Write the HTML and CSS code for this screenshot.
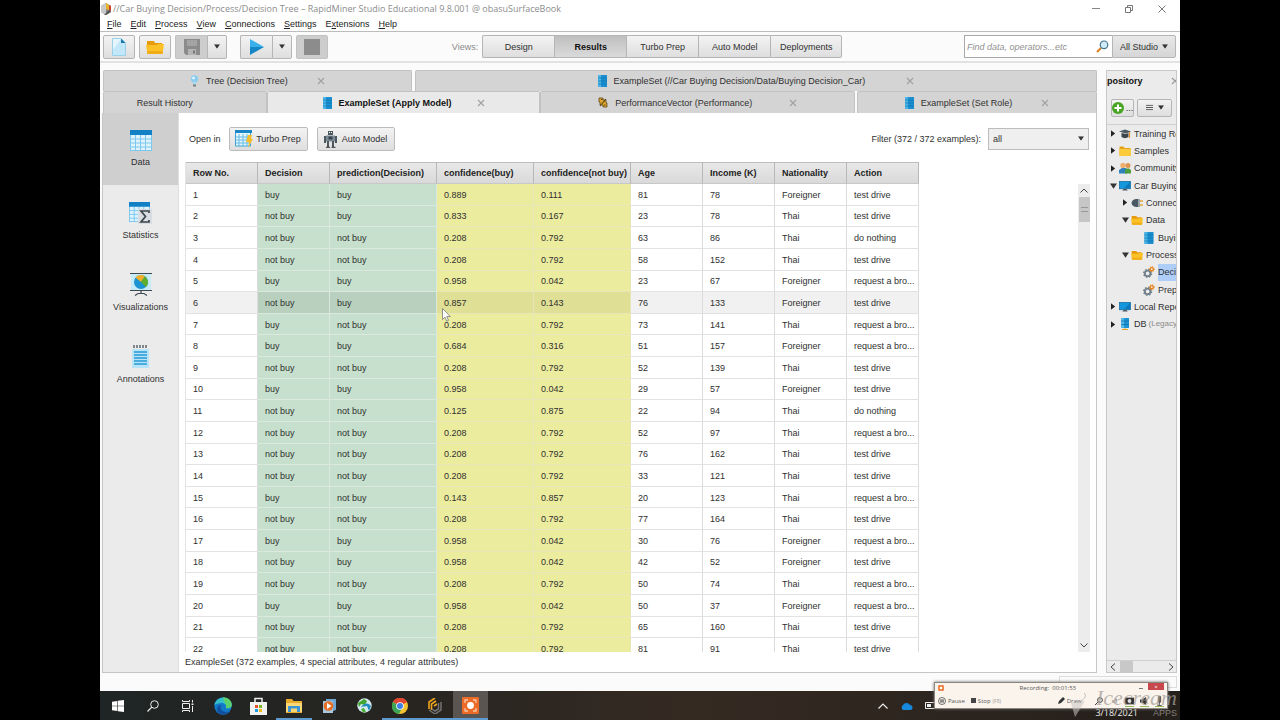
FILE: index.html
```html
<!DOCTYPE html>
<html lang="en">
<head>
<meta charset="utf-8">
<title>//Car Buying Decision/Process/Decision Tree – RapidMiner Studio Educational</title>
<link rel="stylesheet" href="styles.css">
</head>
<body>
<svg class="defs" aria-hidden="true">
  <symbol id="i-close" viewBox="0 0 8 8"><path d="M1 1l6 6M7 1L1 7" fill="none" stroke="currentColor" stroke-width="1.1"/></symbol>
  <symbol id="i-set" viewBox="0 0 9 12"><rect width="9" height="12" fill="#1b8fd0"/><rect width="3" height="12" fill="#49b4e6"/><path d="M0 3h9M0 6h9M0 9h9" stroke="#0f6ea8" stroke-width=".6"/></symbol>
  <symbol id="i-folder" viewBox="0 0 12 11"><path d="M.5 1h4l1 1.500h6V10H.5z" fill="#e3a21a"/><path d="M.5 3.500h11.500V10.500H.5z" fill="#fbcb3c"/></symbol>
  <symbol id="i-open" viewBox="0 0 18 16"><path d="M1 2h7l1 2h7v3H1z" fill="#e79a0c"/><path d="M0 6h11l1-1h6l-1.500 10H1.500z" fill="#fcc127"/><path d="M1 12h16l-.5 3H1.500z" fill="#f0ad15"/></symbol>
  <symbol id="i-monitor" viewBox="0 0 13 12"><rect x=".5" y="1" width="12" height="8" fill="#1497dc" stroke="#126da0" stroke-width=".8"/><path d="M12 1.500v7L6 8z" fill="#0d79ba"/><path d="M5 9h3l1.500 2h-6z" fill="#4e5b63"/></symbol>
  <symbol id="i-gears" viewBox="0 0 13 13"><circle cx="5" cy="8" r="3" fill="none" stroke="#71808b" stroke-width="2"/><circle cx="5" cy="8" r="4.300" fill="none" stroke="#71808b" stroke-width="1.400" stroke-dasharray="1.700 1.677"/><circle cx="9.500" cy="3.500" r="1.700" fill="none" stroke="#e8851d" stroke-width="1.500"/><circle cx="9.500" cy="3.500" r="2.800" fill="none" stroke="#e8851d" stroke-width="1" stroke-dasharray="1.100 1.100"/></symbol>
  <symbol id="i-down" viewBox="0 0 8 6"><path d="M0 0h8L4 6z" fill="#333"/></symbol>
  <symbol id="i-right" viewBox="0 0 6 8"><path d="M0 0l5 4-5 4z" fill="#222"/></symbol>
  <symbol id="i-grid" viewBox="0 0 22 21"><rect x=".5" y=".5" width="21" height="20" fill="#dff3fc" stroke="#7cc8ee"/><path d="M5.500 5v15M10.500 5v15M15.500 5v15M1 9h20M1 13h20M1 17h20" stroke="#7cc8ee" stroke-width="1"/><rect width="22" height="5" fill="#1180c4"/></symbol>
  <symbol id="i-bars" viewBox="0 0 8 7"><path d="M0 1h8M0 3.500h8M0 6h8" stroke="#444" stroke-width="1"/></symbol>
</svg>

<div class="window">
  <header class="titlebar">
    <svg class="ic12" viewBox="0 0 12 12"><path d="M6 0l5 3v6l-5 3-5-3V3z" fill="#888"/><path d="M6 0L1 3v6l5 3z" fill="#c9c9c9"/><path d="M6 0l3 2v5L6 6z" fill="#e6b62c"/><path d="M9 2l2 1v5L9 7z" fill="#c8402d"/><path d="M4 12l5-5 2 2-5 3z" fill="#555"/></svg>
    <h1>//Car Buying Decision/Process/Decision Tree – RapidMiner Studio Educational 9.8.001 @ obasuSurfaceBook</h1>
    <div class="winbtns">
      <button aria-label="Minimize"><svg viewBox="0 0 8 8"><path d="M0 3.500h8" stroke="#888"/></svg></button>
      <button aria-label="Restore"><svg viewBox="0 0 8 8"><path d="M.5 2.500h5v5h-5zM2.500 2.500v-2h5v5h-2" fill="none" stroke="#777"/></svg></button>
      <button aria-label="Close"><svg viewBox="0 0 8 8"><path d="M.5 .5l7 7M7.500 .5l-7 7" stroke="#777"/></svg></button>
    </div>
  </header>

  <nav class="menubar">
    <button><u>F</u>ile</button><button><u>E</u>dit</button><button><u>P</u>rocess</button><button><u>V</u>iew</button><button><u>C</u>onnections</button><button><u>S</u>ettings</button><button>E<u>x</u>tensions</button><button><u>H</u>elp</button>
  </nav>

  <div class="toolbar">
    <div class="tools">
      <button class="btn tool" aria-label="New process"><svg width="14" height="18" viewBox="0 0 14 18"><path d="M.5 .5h8.500l4.500 4.500v12.500H.5z" fill="#c2e7f9" stroke="#9ccfe9"/><path d="M1 12L9 1H1z" fill="#e4f5fd"/><path d="M9 .5v4.500h4.500z" fill="#1b78ae"/></svg></button>
      <button class="btn tool" aria-label="Open"><svg width="18" height="16"><use href="#i-open"/></svg></button>
      <div class="split">
        <button class="btn tool off" aria-label="Save"><svg width="16" height="16" viewBox="0 0 16 16"><path d="M0 0h16v16H2l-2-2z" fill="#8b8b8b"/><path d="M3 1h10v6H3z" fill="#a3a3a3"/><path d="M4 10h8v6H4z" fill="#b4b4b4"/><path d="M9 11.500h2v3H9z" fill="#777"/></svg></button>
        <button class="btn drop" aria-label="Save options"><svg width="6" height="5" viewBox="0 0 8 6"><use href="#i-down"/></svg></button>
      </div>
      <div class="split run">
        <button class="btn tool" aria-label="Run"><svg width="14" height="16" viewBox="0 0 14 16"><path d="M0 0l14 8H0z" fill="#39b0ea"/><path d="M0 16l14-8H0z" fill="#1587c6"/></svg></button>
        <button class="btn drop" aria-label="Run options"><svg width="6" height="5" viewBox="0 0 8 6"><use href="#i-down"/></svg></button>
      </div>
      <button class="btn tool off" aria-label="Stop"><svg width="16" height="16"><rect width="16" height="16" fill="#8c8c8c"/></svg></button>
    </div>
    <div class="views">
      <span>Views:</span>
      <div class="seg"><button class="btn">Design</button><button class="btn active">Results</button><button class="btn">Turbo Prep</button><button class="btn">Auto Model</button><button class="btn">Deployments</button></div>
    </div>
    <div class="search">
      <label><input type="search" placeholder="Find data, operators...etc" aria-label="Find data, operators"><svg width="13" height="13" viewBox="0 0 13 13"><path d="M1 12l4-4" stroke="#d9822b" stroke-width="2.200"/><circle cx="8" cy="4.800" r="3.800" fill="#cfeaf8" stroke="#48738c" stroke-width="1.200"/></svg></label>
      <button class="btn">All Studio <svg width="6" height="5" viewBox="0 0 8 6"><use href="#i-down"/></svg></button>
    </div>
  </div>

  <div class="workspace">
    <section class="results">
      <div class="tabs top">
        <div class="tab tree"><svg width="9" height="12" viewBox="0 0 9 12"><circle cx="4.500" cy="4" r="3.700" fill="#8ccdee"/><path d="M3 6.500h3v3H3z" fill="#a5d8f0"/><path d="M3 9.500h3v2H3z" fill="#777f84"/><circle cx="3.500" cy="3" r="1.300" fill="#ecf9ff"/></svg><span>Tree (Decision Tree)</span><button aria-label="Close tab"><svg><use href="#i-close"/></svg></button></div>
        <div class="tab car"><svg width="9" height="12"><use href="#i-set"/></svg><span>ExampleSet (//Car Buying Decision/Data/Buying Decision_Car)</span><button aria-label="Close tab"><svg><use href="#i-close"/></svg></button></div>
      </div>
      <div class="tabs">
        <div class="tab history"><span>Result History</span></div>
        <div class="tab apply active"><svg width="9" height="12"><use href="#i-set"/></svg><span>ExampleSet (Apply Model)</span><button aria-label="Close tab"><svg><use href="#i-close"/></svg></button></div>
        <div class="tab perf"><svg width="10" height="11" viewBox="0 0 10 11"><path d="M1 1h4v2h3v3h1v4H5V8H2V5H1z" fill="#e0a62b" stroke="#5d4718" stroke-width=".8"/><path d="M8 2L2 9M3 2.500h1.500M6 8h1.500" stroke="#5d4718" stroke-width="1.100"/></svg><span>PerformanceVector (Performance)</span><button aria-label="Close tab"><svg><use href="#i-close"/></svg></button></div>
        <div class="tab role"><svg width="9" height="12"><use href="#i-set"/></svg><span>ExampleSet (Set Role)</span><button aria-label="Close tab"><svg><use href="#i-close"/></svg></button></div>
      </div>
      <div class="panel">
        <nav class="side">
          <button class="active"><svg width="22" height="21"><use href="#i-grid"/></svg>Data</button>
          <button><svg width="24" height="22" viewBox="0 0 24 22"><svg width="21" height="20" viewBox="0 0 22 21"><use href="#i-grid"/></svg><rect x="9" y="7" width="14" height="15" fill="#d9dde2"/><path d="M20 11V9h-8l4.500 5.500L12 20h8v-2" fill="none" stroke="#3c454c" stroke-width="1.700"/></svg>Statistics</button>
          <button><svg width="22" height="23" viewBox="0 0 22 23"><rect x="1" y="1" width="20" height="16" fill="#c8ebf9"/><path d="M0 .5h22M0 17.500h22" stroke="#3e4a52"/><circle cx="11" cy="9" r="7" fill="#1c94d2"/><path d="M11 9L5.500 4.500A7 7 0 0 1 15 3.200z" fill="#f0b02a"/><path d="M11 9l4-5.800A7 7 0 0 1 16 14z" fill="#5fae2e"/><path d="M11 18v2M5 22.500l3-2h6l3 2" fill="none" stroke="#3e4a52" stroke-width="1.200"/></svg>Visualizations</button>
          <button><svg width="17" height="23" viewBox="0 0 17 23"><path d="M0 4h17v19H0z" fill="#b9e3f7"/><path d="M2 0v3M5 0v3M8 0v3M11 0v3M14 0v3" stroke="#4a555c" stroke-width="1.300"/><path d="M2 7h13M2 10h13M2 13h13M2 16h13M2 19h13" stroke="#249bd6" stroke-width="1.400"/></svg>Annotations</button>
        </nav>
        <div class="data">
          <div class="databar">
            <span>Open in</span>
            <button class="btn prep"><svg width="18" height="18" viewBox="0 0 18 18"><path d="M.5 1h15v15H.5z" fill="#e6f6fd" stroke="#3ba3da"/><path d="M4 4v12M8 4v12M12 4v12M1 7h15M1 10h15M1 13h15" stroke="#66bce6"/><path d="M0 0h17v3H0z" fill="#1a86c7"/><path d="M13 5h4l-1 4h2l-5 9 1-6h-3z" fill="#f6bd2a"/></svg>Turbo Prep</button>
            <button class="btn auto"><svg width="13" height="18" viewBox="0 0 13 18"><path d="M4 1h5v4H4z" fill="#4b5860"/><path d="M5 2.500h1M7 2.500h1" stroke="#fff"/><path d="M2 5.500h9v6H2z" fill="#7b8b95"/><path d="M4.500 6.500h4v3h-4z" fill="#39454c"/><path d="M1 6v7M12 6v7M4 11v6M9 11v6" stroke="#4b5860" stroke-width="2"/><path d="M2 17.300h4M7.500 17.300h4" stroke="#333"/></svg>Auto Model</button>
            <label class="filter">Filter (372 / 372 examples):
              <span class="pick"><select><option>all</option></select><svg width="6" height="5" viewBox="0 0 8 6"><use href="#i-down"/></svg></span>
            </label>
          </div>
          <div class="grid">
            <div class="clip">
            <table>
              <colgroup><col><col><col class="pred"><col class="conf"><col class="conf"><col><col><col><col></colgroup>
              <thead><tr><th>Row No.<th>Decision<th>prediction(Decision)<th>confidence(buy)<th>confidence(not buy)<th>Age<th>Income (K)<th>Nationality<th>Action</tr></thead>
              <tbody>
              <tr><td>1<td>buy<td>buy<td>0.889<td>0.111<td>81<td>78<td>Foreigner<td>test drive
              <tr><td>2<td>not buy<td>buy<td>0.833<td>0.167<td>23<td>78<td>Thai<td>test drive
              <tr><td>3<td>not buy<td>not buy<td>0.208<td>0.792<td>63<td>86<td>Thai<td>do nothing
              <tr><td>4<td>not buy<td>not buy<td>0.208<td>0.792<td>58<td>152<td>Thai<td>test drive
              <tr><td>5<td>buy<td>buy<td>0.958<td>0.042<td>23<td>67<td>Foreigner<td>request a bro...
              <tr class="hover"><td>6<td>not buy<td>buy<td>0.857<td>0.143<td>76<td>133<td>Foreigner<td>test drive
              <tr><td>7<td>buy<td>not buy<td>0.208<td>0.792<td>73<td>141<td>Thai<td>request a bro...
              <tr><td>8<td>buy<td>buy<td>0.684<td>0.316<td>51<td>157<td>Foreigner<td>request a bro...
              <tr><td>9<td>not buy<td>not buy<td>0.208<td>0.792<td>52<td>139<td>Thai<td>test drive
              <tr><td>10<td>buy<td>buy<td>0.958<td>0.042<td>29<td>57<td>Foreigner<td>test drive
              <tr><td>11<td>not buy<td>not buy<td>0.125<td>0.875<td>22<td>94<td>Thai<td>do nothing
              <tr><td>12<td>not buy<td>not buy<td>0.208<td>0.792<td>52<td>97<td>Thai<td>request a bro...
              <tr><td>13<td>not buy<td>not buy<td>0.208<td>0.792<td>76<td>162<td>Thai<td>test drive
              <tr><td>14<td>not buy<td>not buy<td>0.208<td>0.792<td>33<td>121<td>Thai<td>test drive
              <tr><td>15<td>buy<td>not buy<td>0.143<td>0.857<td>20<td>123<td>Thai<td>request a bro...
              <tr><td>16<td>not buy<td>not buy<td>0.208<td>0.792<td>77<td>164<td>Thai<td>test drive
              <tr><td>17<td>buy<td>buy<td>0.958<td>0.042<td>30<td>76<td>Foreigner<td>request a bro...
              <tr><td>18<td>not buy<td>buy<td>0.958<td>0.042<td>42<td>52<td>Foreigner<td>test drive
              <tr><td>19<td>not buy<td>not buy<td>0.208<td>0.792<td>50<td>74<td>Thai<td>request a bro...
              <tr><td>20<td>buy<td>buy<td>0.958<td>0.042<td>50<td>37<td>Foreigner<td>request a bro...
              <tr><td>21<td>not buy<td>not buy<td>0.208<td>0.792<td>65<td>160<td>Thai<td>test drive
              <tr><td>22<td>not buy<td>not buy<td>0.208<td>0.792<td>81<td>91<td>Thai<td>test drive
              </tbody>
            </table>
            </div>
            <div class="vscroll"><svg width="8" height="5" viewBox="0 0 8 5"><path d="M.5 4.500L4 1l3.500 3.500" fill="none" stroke="#444"/></svg><div class="thumb"></div><svg width="8" height="5" viewBox="0 0 8 5"><path d="M.5 .5L4 4 7.500 .5" fill="none" stroke="#444"/></svg></div>
          </div>
          <footer>ExampleSet (372 examples, 4 special attributes, 4 regular attributes)</footer>
        </div>
      </div>
    </section>

    <aside class="repo">
      <div class="repohead"><h2>pository</h2><button aria-label="Close panel"><svg><use href="#i-close"/></svg></button></div>
      <div class="repobar">
        <button class="btn add"><svg width="12" height="12" viewBox="0 0 12 12"><circle cx="6" cy="6" r="6" fill="#48a423"/><path d="M6 2.500v7M2.500 6h7" stroke="#fff" stroke-width="2"/></svg>...</button>
        <button class="btn more" aria-label="Repository menu"><svg width="7" height="7" viewBox="0 0 8 7"><use href="#i-bars"/></svg><svg width="6" height="5" viewBox="0 0 8 6"><use href="#i-down"/></svg></button>
      </div>
      <ul class="treeview">
        <li><svg class="arr"><use href="#i-right"/></svg><svg class="ti" viewBox="0 0 12 12"><path d="M0 3.500L6 1.500l6 2-5 2z" fill="#4a5963"/><path d="M2.500 5v4c2 1.500 5 1.500 7 0V5L7 6z" fill="#3a454c"/><path d="M10.500 4v6" stroke="#e39130" stroke-width="1.200"/></svg>Training Resources</li>
        <li><svg class="arr"><use href="#i-right"/></svg><svg class="ti"><use href="#i-folder"/></svg>Samples</li>
        <li><svg class="arr"><use href="#i-right"/></svg><svg class="ti" viewBox="0 0 12 12"><circle cx="4" cy="3.500" r="2.700" fill="#eeb06c"/><circle cx="9" cy="3.500" r="2.500" fill="#dd9650"/><path d="M0 11.500V8l3-2h4l1 5.500z" fill="#2f82bd"/><path d="M6 11.500V8l1-1.500h3l2 1.500v3.500z" fill="#4d9d3d"/></svg>Community Samples</li>
        <li><svg class="arr open"><use href="#i-down"/></svg><svg class="ti"><use href="#i-monitor"/></svg>Car Buying Decision</li>
        <li class="l2"><svg class="arr"><use href="#i-right"/></svg><svg class="ti" viewBox="0 0 12 12"><path d="M7 2v8H5C-1 9-1 3 5 2z" fill="#495862"/><path d="M8 2v8" stroke="#7d8990" stroke-width="1.500"/><path d="M9 4h3M9 8h3" stroke="#e1a634" stroke-width="1.300"/></svg>Connections</li>
        <li class="l2"><svg class="arr open"><use href="#i-down"/></svg><svg class="ti" viewBox="0 0 18 16"><use href="#i-open"/></svg>Data</li>
        <li class="l3"><svg class="ti"><use href="#i-set"/></svg>Buying Decision</li>
        <li class="l2"><svg class="arr open"><use href="#i-down"/></svg><svg class="ti" viewBox="0 0 18 16"><use href="#i-open"/></svg>Process</li>
        <li class="l3"><svg class="ti"><use href="#i-gears"/></svg><mark>Decision Tree</mark></li>
        <li class="l3"><svg class="ti"><use href="#i-gears"/></svg>Prepare</li>
        <li><svg class="arr"><use href="#i-right"/></svg><svg class="ti"><use href="#i-monitor"/></svg>Local Repository</li>
        <li><svg class="arr"><use href="#i-right"/></svg><svg class="ti" viewBox="0 0 12 12"><path d="M2 0h8v10H2z" fill="#1c93d2"/><path d="M2 0h3v10H2z" fill="#51b8e8"/><path d="M2 3h8M2 6.500h8" stroke="#0e6ca6" stroke-width=".7"/><path d="M6 10v2M3 11.500h6" stroke="#e2a42b"/></svg>DB <small>(Legacy)</small></li>
      </ul>
      <div class="hscroll"><svg width="6" height="8" viewBox="0 0 6 8"><path d="M5 .5L1 4l4 3.500" fill="none" stroke="#444"/></svg><div class="thumb"></div><svg width="6" height="8" viewBox="0 0 6 8"><path d="M1 .5L5 4 1 7.500" fill="none" stroke="#444"/></svg></div>
    </aside>
  </div>
  <div class="status"><div class="statusbox"></div></div>

  <div class="taskbar">
    <div class="apps">
      <button aria-label="Start"><svg width="12" height="12" viewBox="0 0 12 12"><path d="M0 1.700l5.200-.8v4.800H0zM5.800 .8L12 0v5.700H5.800zM0 6.300h5.200v4.800L0 10.300zM5.800 6.300H12V12l-6.200-.8z" fill="#fff"/></svg></button>
      <button aria-label="Search"><svg width="12" height="12" viewBox="0 0 12 12"><circle cx="7.500" cy="4.500" r="3.800" fill="none" stroke="#eee"/><path d="M4.800 7.200L.5 11.500" stroke="#eee" stroke-width="1.200"/></svg></button>
      <button aria-label="Task view"><svg width="12" height="12" viewBox="0 0 12 12"><path d="M.5 3.500h7v5h-7zM.5 0v1.500h7V0M.5 12v-1.500h7V12M10.500 0v2.500M10.500 6v6" fill="none" stroke="#eee"/><path d="M9.500 3.500h2v1.500h-2z" fill="#eee"/></svg></button>
      <button aria-label="Edge"><svg width="18" height="18" viewBox="0 0 18 18"><circle cx="9" cy="9" r="8.700" fill="#1478c8"/><path d="M.5 8C2-1 15-2 17.700 7c.5 4-3 5-6 4 1.500-3-1-5-4-5C4 6 2 7 .5 8z" fill="#35c0c8"/><path d="M9 .3c6 0 9 4 8.700 8-.7 3-4 3.500-6 2.700 1-2 .5-4-1-5z" fill="#5bd06c"/><path d="M7 8c-2 5 3 8 8.500 6.500C11 19 3 18 3 12c0-2 2-4 4-4z" fill="#124f9c"/></svg></button>
      <button aria-label="Store"><svg width="17" height="18" viewBox="0 0 17 18"><path d="M0 5h17v13H0z" fill="#f2f2f2"/><path d="M5 5V1.500h7V5" fill="none" stroke="#eee" stroke-width="1.500"/><path d="M5 8h3v3H5z" fill="#e8502b"/><path d="M9 8h3v3H9z" fill="#7eb81f"/><path d="M5 12h3v3H5z" fill="#1c9ee0"/><path d="M9 12h3v3H9z" fill="#f5b713"/></svg></button>
      <button class="running" aria-label="File Explorer"><svg width="16" height="14" viewBox="0 0 16 14"><path d="M0 0h6l1.500 2H16v12H0z" fill="#e8ab2c"/><path d="M0 4h16v9H0z" fill="#fcd775"/><path d="M2 7h12v6h-3V9.500H5V13H2z" fill="#3a94d6"/></svg></button>
      <button aria-label="Media player"><svg width="13" height="14" viewBox="0 0 13 14"><path d="M3 0h10v11l-3 1H3z" fill="#6ca7d3"/><path d="M0 2h10v12H0z" fill="#a7c6dd"/><circle cx="5.500" cy="7" r="4.800" fill="#e66f24"/><path d="M4 4l4.500 3L4 10z" fill="#fff"/></svg></button>
      <button aria-label="Globe"><svg width="15" height="15" viewBox="0 0 15 15"><circle cx="7.500" cy="7.500" r="7.200" fill="#d5eaf0"/><path d="M1 5l6-4 3 2-2 4-4-1-2 3z" fill="#42a52d"/><path d="M4 9c3-4 7-5 10-1l-2 5-2-5z" fill="#238ac0"/><path d="M4 11l3-1 2 4-3 .6z" fill="#4bb032"/></svg></button>
      <button class="running" aria-label="Chrome"><svg width="16" height="16" viewBox="0 0 16 16"><circle cx="8" cy="8" r="8" fill="#f6c330"/><path d="M8 8L1 4a8 8 0 0 1 14 0z" fill="#e24534"/><path d="M8 8L1 4a8 8 0 0 0 6 12l3-6z" fill="#3ba557"/><path d="M1 4a8 8 0 0 1 14 0H8z" fill="#e24534"/><circle cx="8" cy="8" r="3.800" fill="#fff"/><circle cx="8" cy="8" r="3" fill="#3f7fe8"/></svg></button>
      <button class="running" aria-label="RapidMiner"><svg width="14" height="16" viewBox="0 0 14 16"><path d="M1 11V4l6-4M3.500 12V6L8 3M6 8l3-2" fill="none" stroke="#f0a51e" stroke-width="1.600"/><path d="M1 12l6 4 6-4V4M4 11l3 2 3.500-2V5" fill="none" stroke="#737373" stroke-width="1.500"/></svg></button>
      <button class="running current" aria-label="Recorder"><svg width="17" height="17" viewBox="0 0 17 17"><rect width="17" height="17" rx="1" fill="#ec6a27"/><path d="M3 6V3h3M11 3h3v3M14 11v3h-3M6 14H3v-3" fill="none" stroke="#f9c6a5" stroke-width="1.300"/><circle cx="8.500" cy="8.500" r="3.400" fill="#fff"/></svg></button>
    </div>
    <div class="tray">
      <svg width="10" height="6" viewBox="0 0 10 6"><path d="M.5 5.500L5 1l4.500 4.500" fill="none" stroke="#eee" stroke-width="1.200"/></svg>
      <svg width="13" height="8" viewBox="0 0 13 8"><path d="M3 8a3 3 0 0 1 0-5 4 4 0 0 1 7 0 2.500 2.500 0 0 1 0 5z" fill="#1789dc"/></svg>
      <svg width="11" height="7" viewBox="0 0 11 7"><path d="M.5 .5h9v6h-9z" fill="none" stroke="#eee"/><path d="M2 2h4v3H2z" fill="#eee"/></svg>
      <time>3/18/2021</time>
    </div>
  </div>

  <div class="recorder">
    <div class="rechead"><svg width="6" height="6" viewBox="0 0 6 6"><rect x="1" y="1" width="4" height="4" fill="#fff" stroke="#e8712c" stroke-width="1.600"/></svg><span>Recording: &nbsp;00:01:53</span><i></i><button aria-label="Close recorder">×</button></div>
    <div class="recbody">
      <button><svg width="8" height="8" viewBox="0 0 8 8"><circle cx="4" cy="4" r="3.500" fill="none" stroke="#333" stroke-width=".7"/><path d="M3 2.300v3.400M5 2.300v3.400" stroke="#222"/></svg>Pause</button>
      <button><svg width="5" height="5"><rect width="5" height="5" fill="#444"/></svg>Stop <small>(F8)</small></button>
      <button class="draw"><svg width="7" height="7" viewBox="0 0 7 7"><path d="M0 7l1-3 4-4 2 2-4 4z" fill="#333"/></svg>Draw</button>
      <span class="recicons">
        <svg width="8" height="8" viewBox="0 0 8 8"><circle cx="5" cy="3" r="2.400" fill="none" stroke="#444"/><path d="M3 5L0 8" stroke="#444"/></svg>
        <span>x1</span>
        <svg class="on" viewBox="0 0 8 8"><path d="M0 1h8v6H0z" fill="#333"/><circle cx="4" cy="4" r="1.700" fill="#ddd"/></svg>
        <svg class="on" viewBox="0 0 8 8"><path d="M0 3h2l3-2v6L2 5H0zM6 2v4" fill="#333" stroke="#333" stroke-width=".7"/></svg>
        <svg class="on" viewBox="0 0 8 8"><path d="M3 0h2v5H3zM4 5v3M2 8h4" fill="#555" stroke="#555" stroke-width=".8"/></svg>
      </span>
    </div>
  </div>
  <div class="brand"><svg width="16" height="28" viewBox="0 0 16 28"><path d="M0 13l14-2-10 16z" fill="#c9c5c0" opacity=".55"/><path d="M9 12c5-3 7-7 4-9" fill="none" stroke="#aaa" opacity=".7"/></svg><b>Icecream</b><small>APPS</small></div>
  <svg class="cursor" width="9" height="14" viewBox="0 0 9 14"><path d="M.5 .5v11l2.500-2.300 1.800 4 1.700-.8-1.700-3.900h3.500z" fill="#fff" stroke="#777" stroke-width=".8"/></svg>
</div>
</body>
</html>
```
FILE: styles.css
```css
* { box-sizing: border-box; }
body { margin: 0; padding: 0 100px; background: #000; font: 9px/12px "Liberation Sans", Arial, sans-serif; color: #303030; }
button, input, select { font: inherit; color: inherit; margin: 0; padding: 0; border: 0; background: none; }
h1, h2, ul { margin: 0; padding: 0; font-weight: normal; }
svg { flex: none; display: block; }
.defs { position: absolute; width: 0; height: 0; }
.window { position: relative; display: flex; flex-direction: column; height: 100vh; background: #fbfbfb; overflow: hidden; }

.titlebar { display: flex; align-items: center; height: 18px; gap: 1px; background: #fff; padding-right: 14px; }
.titlebar h1 { flex: 1; font: 9px/14px "Open Sans", "Noto Sans", sans-serif; color: #8c8c8c; white-space: nowrap; }
.ic12 { width: 12px; height: 12px; }
.winbtns { display: flex; gap: 25px; }
.winbtns svg { width: 8px; height: 8px; }
.menubar { display: flex; align-items: center; gap: 9px; height: 13px; padding: 0 0 2px 7px; background: #fff; color: #222; }

.btn { display: flex; align-items: center; justify-content: center; gap: 4px; height: 24px; border: 1px solid #b5b5b5; border-radius: 2px; background: linear-gradient(#f3f3f3, #dedede); white-space: nowrap; }
.toolbar { display: flex; align-items: center; justify-content: space-between; height: 32px; padding: 0 4px 0 3px; border-top: 1px solid #bcbcbc; border-bottom: 2px solid #e2e2e2; }
.tools { display: flex; gap: 4px; }
.tool { width: 32px; }
.tool.off { background: #cdcdcd; border-color: #c2c2c2; }
.drop { width: 20px; }
.split { display: flex; }
.split .tool { border-right: 0; border-radius: 2px 0 0 2px; }
.split .drop { border-radius: 0 2px 2px 0; }
.split.run { margin-left: 9px; }
.views { display: flex; align-items: center; gap: 4px; color: #8a8a8a; margin-left: 2px; }
.seg { display: flex; color: #303030; }
.seg .btn { width: 72px; height: 23px; border-right-width: 0; border-radius: 0; }
.seg .btn:first-child { border-radius: 2px 0 0 2px; }
.seg .btn:last-child { border-right-width: 1px; border-radius: 0 2px 2px 0; }
.seg .active { background: linear-gradient(#bfbfbf, #dadada); font-weight: bold; color: #111; }
.search { display: flex; }
.search label { display: flex; align-items: center; width: 148px; height: 23px; padding: 0 3px 0 2px; border: 1px solid #a8a8a8; border-right: 0; background: #fff; }
.search input { flex: 1; min-width: 0; outline: 0; font-style: italic; }
.search input::placeholder { color: #909090; opacity: 1; }
.search .btn { width: 64px; height: 23px; border-radius: 0 2px 2px 0; background: linear-gradient(#e8e8e8, #d6d6d6); }

.workspace { flex: 1; min-height: 0; display: flex; gap: 9px; padding: 7px 3px 0 2px; }
.results { flex: 1; min-width: 0; display: flex; flex-direction: column; }
.tabs { display: flex; height: 22px; padding-left: 1px; }
.tabs.top { gap: 3px; height: 21px; }
.tab { display: flex; align-items: center; justify-content: center; gap: 7px; background: #d4d4d4; border: 1px solid #c2c2c2; border-bottom: 0; border-radius: 2px 2px 0 0; white-space: nowrap; }
.tab button { margin-left: 22px; color: #a0a0a0; }
.tab button svg { width: 8px; height: 8px; }
.tab.tree { flex: 308; }
.tab.car { flex: 683; }
.tab.car button { margin-left: 34px; }
.tab.history { flex: 163; }
.tab.history span { margin-right: 40px; }
.tab.apply { flex: 274; }
.tab.apply button { margin-left: 18px; }
.tab.perf { flex: 315; }
.tab.perf button { margin-left: 30px; }
.tab.role { flex: 240; margin-left: 2px; }
.tab.active { background: #e9e9e9; font-weight: bold; color: #111; }

.panel { flex: 1; min-height: 0; display: flex; border: 1px solid #c6c6c6; border-top: 0; background: #fff; }
.side { width: 76px; background: #ebebeb; border-right: 1px solid #dedede; }
.side button { display: flex; flex-direction: column; align-items: center; justify-content: center; gap: 5px; width: 100%; height: 72px; }
.side .active { background: #cfcfcf; }
.data { flex: 1; min-width: 0; display: flex; flex-direction: column; padding: 0 6px; }
.databar { display: flex; align-items: center; height: 49px; gap: 9px; padding: 2px 1px 0 4px; }
.databar .btn { gap: 3px; border-color: #bcbcbc; }
.databar .prep { width: 79px; margin-left: -1px; }
.databar .auto { width: 78px; gap: 5px; }
.filter { display: flex; align-items: center; gap: 7px; margin-left: auto; }
.pick { display: flex; align-items: center; width: 101px; height: 22px; padding: 0 4px; border: 1px solid #bcbcbc; background: #efefef; }
.pick select { flex: 1; appearance: none; outline: 0; }
.grid { flex: 1; min-height: 0; display: flex; justify-content: space-between; }
.clip { overflow: hidden; }
table { border-collapse: separate; border-spacing: 0; table-layout: fixed; width: 733px; height: 498px; border-left: 1px solid #e4e4e4; }
col { width: 72px; }
col.pred { width: 107px; }
col.conf { width: 97px; }
th, td { padding: 0 0 0 7px; text-align: left; white-space: nowrap; line-height: 12px; border-right: 1px solid #dcdcdc; border-bottom: 1px solid #e2e2e2; }
th { height: 22px; color: #222; background: linear-gradient(#e8e8e8, #d9d9d9); border-top: 1px solid #bdbdbd; border-right-color: #b8b8b8; border-bottom-color: #c8c8c8; }
td { padding-top: 1px; }
td:nth-child(2), td:nth-child(3) { background: #c7dfcd; border-color: #dbe8de; }
td:nth-child(4), td:nth-child(5) { background: #ecec9f; border-color: #e6e6b9; }
.hover td { background: #f1f1f1; }
.hover td:nth-child(2), .hover td:nth-child(3) { background: #b9d0bf; }
.hover td:nth-child(4), .hover td:nth-child(5) { background: #dfdf95; }
.vscroll { display: flex; flex-direction: column; align-items: center; width: 12px; margin-top: 22px; padding: 4px 0; background: #ececec; }
.vscroll .thumb { width: 11px; height: 25px; margin: 4px 0 auto; background: linear-gradient(#999, #999) center 10px / 7px 1px no-repeat, linear-gradient(#999, #999) center 14px / 7px 1px no-repeat, #c6c6c6; }
footer { height: 20px; line-height: 20px; }

.repo { width: 71px; display: flex; flex-direction: column; overflow: hidden; background: #ebebeb; border: 1px solid #c8c8c8; }
.repohead { display: flex; align-items: center; justify-content: space-between; height: 20px; overflow: hidden; }
.repohead h2 { font-size: 9px; font-weight: bold; color: #111; }
.repohead button { margin-right: -3px; color: #999; }
.repohead svg { width: 8px; height: 8px; }
.repobar { display: flex; align-items: center; gap: 3px; height: 34px; padding-left: 4px; border-bottom: 1px solid #d0d0d0; }
.repobar .btn { height: 18px; }
.repobar .add { width: 23px; gap: 2px; }
.repobar .more { width: 35px; gap: 5px; }
.treeview { display: grid; grid-auto-rows: 1fr; height: 208px; list-style: none; }
.treeview li { display: flex; align-items: center; gap: 3px; padding-left: 4px; white-space: nowrap; }
.treeview .l2 { padding-left: 16px; }
.treeview .l3 { padding-left: 36px; }
.treeview small { font-size: 8px; color: #8a8a8a; margin-left: -1px; }
.arr { width: 5px; height: 7px; }
.arr.open { width: 7px; height: 6px; margin: 0 -1px; }
.ti { width: 12px; height: 12px; }
mark { background: #aecdf8; color: inherit; line-height: 17px; }
.hscroll { display: flex; align-items: center; height: 12px; margin-top: auto; padding: 0 2px 0 3px; border-top: 1px solid #cfcfcf; }
.hscroll .thumb { width: 13px; height: 11px; margin: 0 auto 0 4px; background: #c8c8c8; }
.status { height: 18px; padding: 3px 3px 0 0; }
.statusbox { width: 118px; height: 12px; margin-left: auto; border: 1px solid #dcdcdc; }

.taskbar { display: flex; justify-content: space-between; height: 29px; background: linear-gradient(90deg, #1f2525, #282521 30%, #352a22 55%, #241f1b); }
.apps { display: flex; width: 388px; }
.apps button { flex: 1; display: flex; align-items: center; justify-content: center; }
.running { box-shadow: inset 0 -2px #5d9bd0; }
.current { background: #5a5550; }
.tray { display: flex; align-items: center; gap: 12px; width: 302px; }
.tray time { margin: 14px 42px 0 auto; font: 9px/14px "Open Sans", "Noto Sans", sans-serif; color: #eee; }

.recorder { position: absolute; right: 12px; bottom: 11px; width: 234px; height: 27px; background: #fbf4ed; border: 1px solid #8d8781; box-shadow: 0 0 3px #666; font: 6px/8px "Open Sans", "Noto Sans", sans-serif; color: #555; }
.rechead { display: flex; align-items: center; height: 10px; padding: 0 3px; }
.rechead span { margin-left: auto; }
.rechead i { width: 4px; height: 1px; margin: 0 5px 0 63px; background: #777; }
.rechead button { width: 16px; height: 7px; background: #c7474c; color: #fff; line-height: 6px; align-self: flex-start; }
.recbody { display: flex; align-items: center; gap: 6px; height: 15px; padding: 0 4px 0 3px; }
.recbody button { display: flex; align-items: center; gap: 2px; }
.recbody small { font-size: 5px; color: #999; }
.recbody .draw { margin-left: auto; }
.recicons { display: flex; align-items: center; gap: 8px; margin-left: 8px; }
.recicons .on { width: 9px; height: 11px; margin: 1px -1px 0; border-bottom: 1px solid #8fbb5c; }
.brand { position: absolute; right: 3px; bottom: 2px; display: grid; grid-template-columns: 16px auto; width: 106px; color: rgba(165, 160, 155, .75); }
.brand svg { grid-row: 1 / 3; align-self: end; }
.brand b { font: italic 22px/22px "Liberation Serif", serif; text-align: right; }
.brand small { font-size: 9px; line-height: 9px; text-align: right; }
.cursor { position: absolute; left: 342px; top: 308px; }
```
